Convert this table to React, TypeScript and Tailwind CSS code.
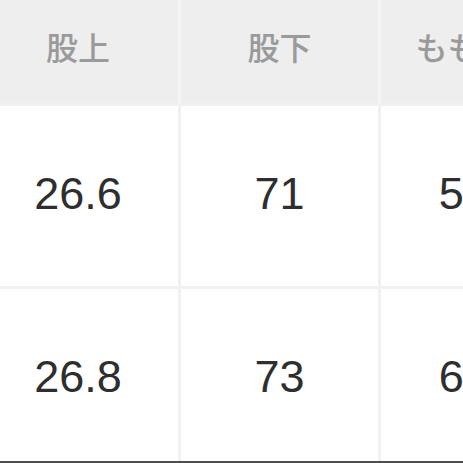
const headers = ['股上', '股下', 'もも周り']
const rows = [
    ['26.6', '71', '57.5'],
    ['26.8', '73', '60.5'],
]

const colWidths = ['w-[200px]', 'w-[197px]', 'w-[197px]']
const cellPad = ['', '', 'pl-[6px]']

export default function App() {
    return (
        <div
            className="w-[463px] h-[463px] overflow-hidden bg-white border-b-2 border-[#4d4d4d]"
            style={{ fontFamily: '"Liberation Sans", "Noto Sans CJK JP", sans-serif' }}
        >
            <div className="ml-[-22px] flex flex-col gap-[3px] bg-[#f1f1f1] w-max">
                {/* header */}
                <div className="flex gap-[3px] bg-[#f4f4f4]">
                    {headers.map((h, i) => (
                        <div
                            key={h}
                            className={`${colWidths[i]} h-[103px] shrink-0 bg-[#eeeeee] flex items-center justify-center pb-[12px] text-[32px] font-medium text-[#9a9a9a]`}
                            style={{ fontFamily: '"Noto Sans CJK JP", sans-serif' }}
                        >
                            {h}
                        </div>
                    ))}
                </div>
                {rows.map((row, r) => (
                    <div key={r} className="flex gap-[3px]">
                        {row.map((v, i) => (
                            <div
                                key={i}
                                className={`${colWidths[i]} ${cellPad[i]} h-[180px] shrink-0 bg-white flex items-center justify-center pb-[5px] text-[45px] text-[#2e2e2e]`}
                            >
                                {v}
                            </div>
                        ))}
                    </div>
                ))}
            </div>
        </div>
    )
}
